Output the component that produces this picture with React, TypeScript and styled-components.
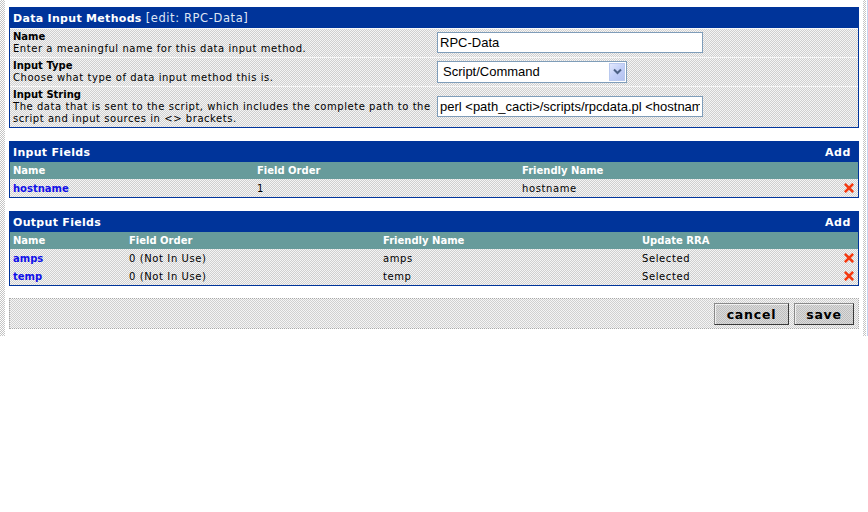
import { createGlobalStyle } from "styled-components";
import styled from "styled-components";

const GlobalStyle = createGlobalStyle`
  html, body {
    margin: 0;
    padding: 0;
    background: #ffffff;
  }
  body {
    font-family: "DejaVu Sans", Verdana, sans-serif;
    font-size: 10px;
    color: #000;
  }
`;

const blue = "#00349a";
const teal = "#679b9b";
const checker = (a: string, b: string) =>
  `conic-gradient(${a} 0 25%, ${b} 0 50%, ${a} 0 75%, ${b} 0) 0 0 / 2px 2px`;
const dots = checker("#d0d0d0", "#f5f5f5");

const Page = styled.div`
  display: flex;
  align-items: stretch;
`;

const LeftRail = styled.div`
  width: 5px;
  background: ${checker("#c4c4c4", "#ffffff")};
`;

const RightRail = styled.div`
  width: 3px;
  margin-left: 4px;
  background: ${checker("#c4c4c4", "#ffffff")};
  border-right: 1px solid #ffffff;
  box-shadow: 2px 0 0 #c6d4f0;
`;

const Main = styled.div`
  width: 850px;
  margin-left: 4px;
  padding: 7px 0 7px 0;
  display: flex;
  flex-direction: column;
  gap: 13px;
`;

const Box = styled.div`
  border: 1px solid ${blue};
  background: ${dots};
`;

const TitleBar = styled.div`
  background: ${blue};
  color: #fff;
  height: 20px;
  display: flex;
  align-items: center;
  justify-content: space-between;
  padding: 0 7px 0 3px;
  font-size: 11px;
  letter-spacing: 0.3px;
`;

const Title = styled.span`
  font-weight: bold;
`;

const Edit = styled.span`
  font-weight: normal;
  font-size: 11.5px;
  letter-spacing: 0.6px;
  color: #dfe6f5;
  margin-left: 4px;
`;

const AddLink = styled.span`
  font-weight: bold;
  letter-spacing: 0.6px;
`;

const FormRow = styled.div<{ $tall?: boolean }>`
  display: grid;
  grid-template-columns: 427px 1fr;
  border-top: 1px solid #f8f8f8;
  min-height: ${(p) => (p.$tall ? "40px" : "28px")};
`;

const LabelCell = styled.div`
  padding: 2px 0 2px 3px;
  line-height: 12px;
  letter-spacing: 0.55px;
`;

const Label = styled.div`
  font-weight: bold;
  letter-spacing: 0;
`;

const FieldCell = styled.div`
  display: flex;
  align-items: center;
  padding-bottom: 1px;
`;

const TextBox = styled.input`
  width: 266px;
  height: 21px;
  box-sizing: border-box;
  border: 1px solid #7f9db9;
  background: #fff;
  padding: 0 2px;
  font-family: "Liberation Sans", Arial, sans-serif;
  font-size: 13px;
  color: #000;
  outline: none;
`;

const SelectBox = styled.div`
  width: 190px;
  height: 22px;
  box-sizing: border-box;
  border: 1px solid #7f9db9;
  background: #fff;
  display: flex;
  align-items: center;
  justify-content: space-between;
  padding: 0 1px 0 5px;
  font-family: "Liberation Sans", Arial, sans-serif;
  font-size: 13px;
`;

const SelectArrow = styled.div`
  width: 16px;
  height: 18px;
  box-sizing: border-box;
  border: 1px solid #b9c9ef;
  background: linear-gradient(135deg, #e2e8fd 0%, #c2cff7 50%, #b4c2f0 100%);
  display: flex;
  align-items: center;
  justify-content: center;
`;

const HeadRow = styled.div<{ $cols: string }>`
  display: grid;
  grid-template-columns: ${(p) => p.$cols};
  background: ${teal};
  color: #fff;
  font-weight: bold;
  height: 17px;
  align-items: center;
`;

const DataRow = styled.div<{ $cols: string }>`
  display: grid;
  grid-template-columns: ${(p) => p.$cols};
  height: 18px;
  align-items: center;
`;

const Cell = styled.div<{ $plain?: boolean }>`
  padding-left: 3px;
  white-space: nowrap;
  letter-spacing: ${(p) => (p.$plain ? "0.6px" : "0")};
`;

const NameLink = styled.span`
  color: #1010e8;
  font-weight: bold;
`;

const DeleteCell = styled.div`
  display: flex;
  justify-content: flex-end;
  padding-right: 4px;
`;

const ButtonBar = styled.div`
  margin-top: -1px;
  border: 1px dotted #a8a8a8;
  background: ${dots};
  display: flex;
  justify-content: flex-end;
  gap: 5px;
  padding: 4px 4px 3px 0;
`;

const Button = styled.button<{ $w: number }>`
  width: ${(p) => p.$w}px;
  height: 22px;
  border: 1px solid #3a3a3a;
  border-top-color: #8a8a8a;
  border-left-color: #8a8a8a;
  background: ${checker("#bdbdbd", "#dcdcdc")};
  box-shadow: inset 1px 1px 0 #f0f0f0;
  font-family: "DejaVu Sans", Verdana, sans-serif;
  font-weight: bold;
  font-size: 12.5px;
  letter-spacing: 0.8px;
  color: #000;
  padding: 0;
  cursor: pointer;
`;

const RedX = () => (
  <svg width="10" height="10" viewBox="0 0 10 10">
    <path d="M1.8 1.8 L8.2 8.2 M8.2 1.8 L1.8 8.2" stroke="#f53a10" strokeWidth="2.6" strokeLinecap="square" />
  </svg>
);

const Chevron = () => (
  <svg width="9" height="7" viewBox="0 0 9 7">
    <path d="M1 1.5 L4.5 5 L8 1.5" stroke="#4d6185" strokeWidth="2" fill="none" />
  </svg>
);

const inputCols = "244px 265px 1fr 20px";
const outputCols = "116px 254px 259px 1fr 20px";

const outputFields = [
  { name: "amps", order: "0 (Not In Use)", friendly: "amps", rra: "Selected" },
  { name: "temp", order: "0 (Not In Use)", friendly: "temp", rra: "Selected" },
];

const App = () => {
  return (
    <>
      <GlobalStyle />
      <Page>
        <LeftRail />
        <Main>
          <Box>
            <TitleBar>
              <span>
                <Title>Data Input Methods</Title>
                <Edit>[edit: RPC-Data]</Edit>
              </span>
            </TitleBar>
            <FormRow>
              <LabelCell>
                <Label>Name</Label>
                Enter a meaningful name for this data input method.
              </LabelCell>
              <FieldCell>
                <TextBox defaultValue="RPC-Data" readOnly />
              </FieldCell>
            </FormRow>
            <FormRow>
              <LabelCell>
                <Label>Input Type</Label>
                Choose what type of data input method this is.
              </LabelCell>
              <FieldCell>
                <SelectBox>
                  <span>Script/Command</span>
                  <SelectArrow>
                    <Chevron />
                  </SelectArrow>
                </SelectBox>
              </FieldCell>
            </FormRow>
            <FormRow $tall>
              <LabelCell>
                <Label>Input String</Label>
                The data that is sent to the script, which includes the complete path to the script and input sources in &lt;&gt; brackets.
              </LabelCell>
              <FieldCell>
                <TextBox defaultValue="perl <path_cacti>/scripts/rpcdata.pl <hostname>" readOnly />
              </FieldCell>
            </FormRow>
          </Box>

          <Box>
            <TitleBar>
              <Title>Input Fields</Title>
              <AddLink>Add</AddLink>
            </TitleBar>
            <HeadRow $cols={inputCols}>
              <Cell>Name</Cell>
              <Cell>Field Order</Cell>
              <Cell>Friendly Name</Cell>
              <Cell />
            </HeadRow>
            <DataRow $cols={inputCols}>
              <Cell><NameLink>hostname</NameLink></Cell>
              <Cell $plain>1</Cell>
              <Cell $plain>hostname</Cell>
              <DeleteCell><RedX /></DeleteCell>
            </DataRow>
          </Box>

          <Box>
            <TitleBar>
              <Title>Output Fields</Title>
              <AddLink>Add</AddLink>
            </TitleBar>
            <HeadRow $cols={outputCols}>
              <Cell>Name</Cell>
              <Cell>Field Order</Cell>
              <Cell>Friendly Name</Cell>
              <Cell>Update RRA</Cell>
              <Cell />
            </HeadRow>
            {outputFields.map((f) => (
              <DataRow key={f.name} $cols={outputCols}>
                <Cell><NameLink>{f.name}</NameLink></Cell>
                <Cell $plain>{f.order}</Cell>
                <Cell $plain>{f.friendly}</Cell>
                <Cell $plain>{f.rra}</Cell>
                <DeleteCell><RedX /></DeleteCell>
              </DataRow>
            ))}
          </Box>

          <ButtonBar>
            <Button $w={75}>cancel</Button>
            <Button $w={60}>save</Button>
          </ButtonBar>
        </Main>
        <RightRail />
      </Page>
    </>
  );
};

export default App;
